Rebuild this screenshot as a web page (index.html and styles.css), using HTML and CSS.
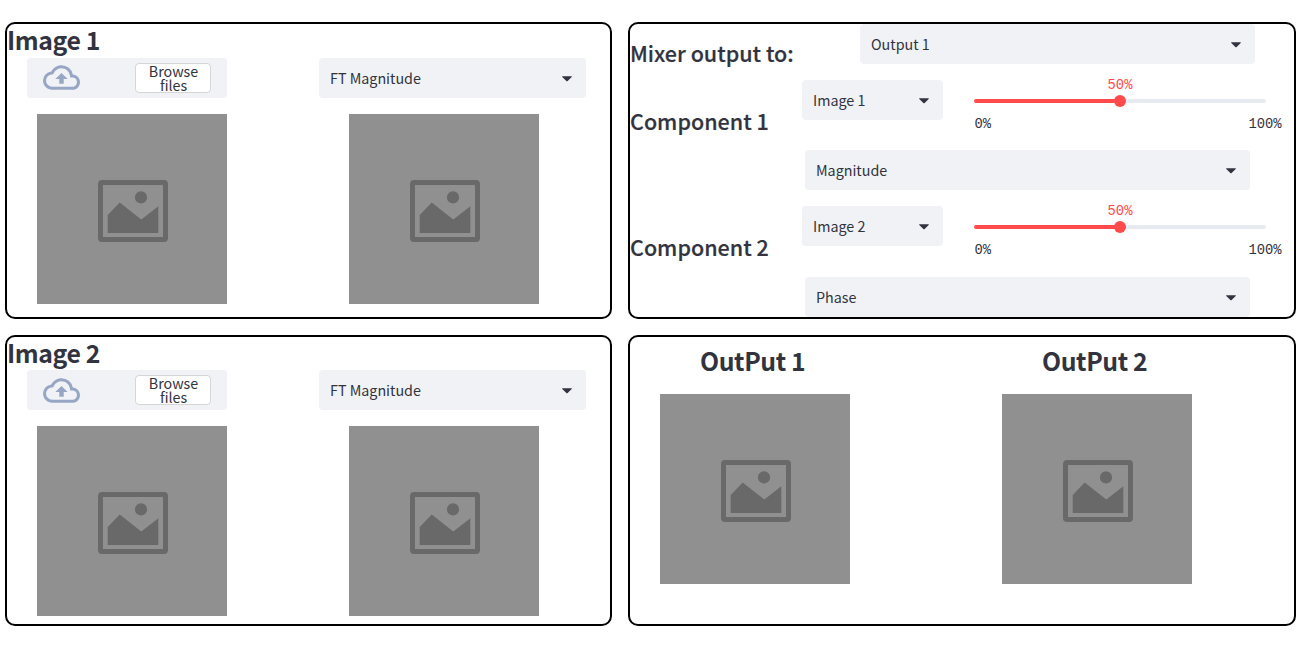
FILE: index.html
```
<!DOCTYPE html>
<html lang="en">
<head>
<meta charset="utf-8">
<title>Image Mixer</title>
<link rel="stylesheet" href="styles.css">
</head>
<body>
<svg class="defs" aria-hidden="true">
  <symbol id="cloud" viewBox="0 0 24 24"><path d="M19.35 10.04A7.49 7.49 0 0012 4C9.11 4 6.6 5.64 5.35 8.04A5.994 5.994 0 000 14c0 3.31 2.69 6 6 6h13c2.76 0 5-2.24 5-5 0-2.64-2.05-4.78-4.65-4.96zM19 18H6c-2.21 0-4-1.79-4-4 0-2.05 1.53-3.76 3.56-3.97l1.07-.11.5-.95A5.469 5.469 0 0112 6c2.62 0 4.88 1.86 5.39 4.43l.3 1.5 1.53.11A2.98 2.98 0 0122 15c0 1.65-1.35 3-3 3zM8 13h2.55v3h2.9v-3H16l-4-4-4 4z"/></symbol>
  <symbol id="caret" viewBox="0 0 24 24"><path d="M12.707 15.293l4.44-4.44c.314-.314.091-.853-.354-.853H7.207c-.445 0-.668.539-.353.854l4.439 4.439c.39.39 1.024.39 1.414 0z"/></symbol>
  <symbol id="picture" viewBox="0 0 70 62"><rect x="2.5" y="2.5" width="65" height="57" rx="1.5" fill="none" stroke="#696969" stroke-width="5"/><circle cx="43" cy="17.4" r="6.1"/><path d="M9.7 35L21.7 22.5L43.3 39.6L60.3 26.3V53H9.7z"/></symbol>
</svg>
<main class="board">
  <section class="panel source">
    <h2 class="title">Image 1</h2>
    <div class="columns">
      <div class="column">
        <div class="uploader"><svg class="cloud"><use href="#cloud"/></svg><button class="browse"><span>Browse files</span></button></div>
        <div class="picture"><svg><use href="#picture"/></svg></div>
      </div>
      <div class="column">
        <div class="select"><span>FT Magnitude</span><svg><use href="#caret"/></svg></div>
        <div class="picture"><svg><use href="#picture"/></svg></div>
      </div>
    </div>
  </section>

  <section class="panel mixer">
    <div class="target">
      <h3 class="label">Mixer output to:</h3>
      <div class="select"><span>Output 1</span><svg><use href="#caret"/></svg></div>
    </div>
    <div class="component">
      <h3 class="label">Component 1</h3>
      <div class="controls">
        <div class="mix">
          <div class="select"><span>Image 1</span><svg><use href="#caret"/></svg></div>
          <div class="slider">
            <div class="value">50%</div>
            <div class="track"><div class="thumb"></div></div>
            <div class="ticks"><span>0%</span><span>100%</span></div>
          </div>
        </div>
        <div class="select part"><span>Magnitude</span><svg><use href="#caret"/></svg></div>
      </div>
    </div>
    <div class="component second">
      <h3 class="label">Component 2</h3>
      <div class="controls">
        <div class="mix">
          <div class="select"><span>Image 2</span><svg><use href="#caret"/></svg></div>
          <div class="slider">
            <div class="value">50%</div>
            <div class="track"><div class="thumb"></div></div>
            <div class="ticks"><span>0%</span><span>100%</span></div>
          </div>
        </div>
        <div class="select part"><span>Phase</span><svg><use href="#caret"/></svg></div>
      </div>
    </div>
  </section>

  <section class="panel source lower">
    <h2 class="title">Image 2</h2>
    <div class="columns">
      <div class="column">
        <div class="uploader"><svg class="cloud"><use href="#cloud"/></svg><button class="browse"><span>Browse files</span></button></div>
        <div class="picture"><svg><use href="#picture"/></svg></div>
      </div>
      <div class="column">
        <div class="select"><span>FT Magnitude</span><svg><use href="#caret"/></svg></div>
        <div class="picture"><svg><use href="#picture"/></svg></div>
      </div>
    </div>
  </section>

  <section class="panel outputs">
    <div class="output">
      <h2 class="title">OutPut 1</h2>
      <div class="picture"><svg><use href="#picture"/></svg></div>
    </div>
    <div class="output">
      <h2 class="title">OutPut 2</h2>
      <div class="picture"><svg><use href="#picture"/></svg></div>
    </div>
  </section>
</main>
</body>
</html>
```
FILE: styles.css
```
* { box-sizing: border-box; }
body {
  margin: 0;
  background: #fff;
  color: #31333f;
  font-family: "Noto Sans CJK SC", "Noto Sans", sans-serif;
  font-size: 14.3px;
}
h2, h3 { margin: 0; white-space: nowrap; }
svg { display: block; }
.defs { display: none; }

.board {
  display: grid;
  grid-template-columns: 607px 668px;
  grid-template-rows: 297px 291px;
  gap: 16px;
  padding: 22px 0 0 5px;
}
.panel {
  border: 2px solid #000;
  border-radius: 10px;
  overflow: hidden;
}
.title { font-size: 24.8px; font-weight: 700; letter-spacing: -0.4px; line-height: 31px; height: 34px; }
.label {
  font-size: 21.5px;
  font-weight: 500;
  line-height: 30px;
  -webkit-text-stroke: 0.2px #31333f;
}

.columns { display: flex; gap: 92px; padding-left: 20px; }
.lower .title { height: 33px; }
.column { display: flex; flex-direction: column; gap: 16px; }
.column .picture { margin-left: 10px; }
.column .select { width: 267px; }
.column + .column .picture { margin-left: 30px; }

.uploader {
  display: flex;
  align-items: center;
  justify-content: space-between;
  width: 200px;
  height: 40px;
  padding: 0 16px;
  border-radius: 4px;
  background: #f0f2f6;
}
.cloud { width: 37px; height: 37px; margin-bottom: 1px; fill: #98a6c6; }
.lower .cloud { margin-bottom: 0; }
.browse {
  width: 76px;
  height: 30px;
  padding: 0 7px 2px 8px;
  border: 1px solid #d6d6d9;
  border-radius: 4px;
  background: #fff;
  color: inherit;
  font: inherit;
  line-height: 14px;
}
.lower .browse { padding-bottom: 1px; }

.picture {
  display: flex;
  width: 190px;
  height: 190px;
  padding: 66px 0 0 61px;
  background: #909090;
}
.picture svg { width: 70px; height: 62px; fill: #696969; }

.select {
  display: flex;
  align-items: center;
  justify-content: space-between;
  height: 40px;
  padding: 0 8px 0 11px;
  border-radius: 4px;
  background: #f0f2f6;
  white-space: nowrap;
}
.select span { padding-bottom: 2px; }
.select svg { width: 22px; height: 22px; fill: #31333f; }

.target { display: flex; justify-content: space-between; height: 56px; padding-right: 39px; }
.target .label { padding-top: 14px; }
.target .select { width: 395px; }
.component { display: flex; height: 126px; }
.component .label { width: 172px; padding-top: 26px; }
.mix { display: flex; gap: 31px; height: 70px; }
.mix .select { width: 141px; }
.part { width: 445px; margin-left: 3px; }
.second .mix { height: 71px; }

.slider {
  width: 292px;
  font-family: "Liberation Mono", monospace;
  font-size: 13.8px;
  line-height: 18px;
}
.value { height: 19px; line-height: 11px; color: #ff4b4b; text-align: center; }
.track {
  display: flex;
  justify-content: center;
  align-items: center;
  height: 4px;
  border-radius: 2px;
  background: linear-gradient(to right, #ff4b4b 50%, #e6eaf1 50%);
}
.thumb { flex: none; width: 12px; height: 12px; border-radius: 50%; background: #ff4b4b; }
.ticks { display: flex; justify-content: space-between; width: 307.5px; padding: 13px 0 0 0.5px; }

.outputs { display: flex; gap: 152px; padding-left: 30px; }
.output { display: flex; flex-direction: column; }
.output .title { height: 57px; padding: 8px 0 0 40px; }
```
